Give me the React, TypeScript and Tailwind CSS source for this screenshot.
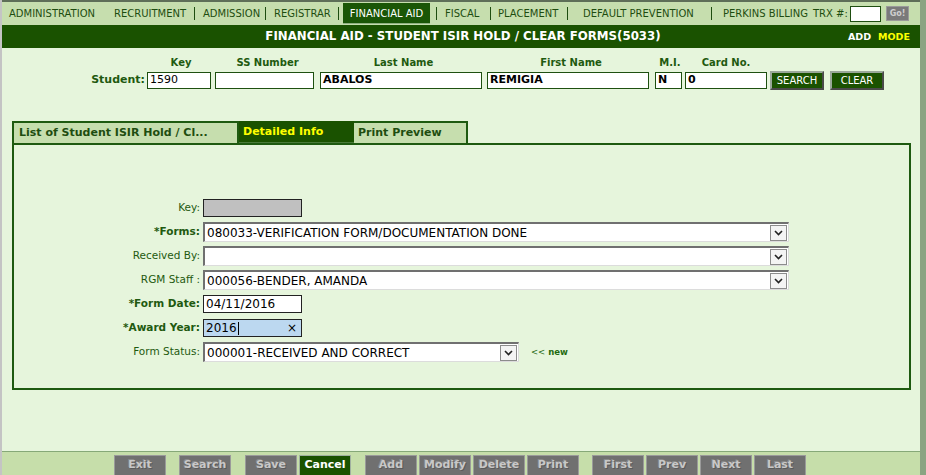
import React from 'react';

const font = { fontFamily: '"DejaVu Sans", Verdana, sans-serif' };

const menu = [
  { label: 'ADMINISTRATION', w: 'w-[105px]', sep: false, gap: '' },
  { label: 'RECRUITMENT', w: 'w-[80px]', sep: false, gap: '' },
  { label: 'ADMISSION', w: 'w-[62px]', sep: true, gap: 'mr-[8px]' },
  { label: 'REGISTRAR', w: 'w-[64px]', sep: true, gap: 'mr-[8px]' },
];
const menu2 = [
  { label: 'FISCAL', w: 'w-[45px]', sep: true, gap: 'mr-[8px]' },
  { label: 'PLACEMENT', w: 'w-[69px]', sep: true, gap: 'mr-[7px]' },
  { label: 'DEFAULT PREVENTION', w: 'w-[128px]', sep: true, gap: 'mr-[15px]' },
  { label: 'PERKINS BILLING', w: 'w-[90px]', sep: true, gap: 'mr-[11px]' },
];

function Chevron() {
  return (
    <span className="flex h-[16px] w-[17px] items-center justify-center border border-[#8c8c8c] bg-[#f4f4f4]">
      <svg width="9" height="6" viewBox="0 0 9 6">
        <path d="M1 1 L4.5 4.5 L8 1" fill="none" stroke="#222" strokeWidth="1.6" />
      </svg>
    </span>
  );
}

function Select({ value, w }: { value: string; w: string }) {
  return (
    <div
      className={`${w} flex h-[20px] items-center justify-between border-t-2 border-l-2 border-t-[#707070] border-l-[#707070] border-b border-r border-b-[#dcdcdc] border-r-[#dcdcdc] bg-white pl-[2px] pr-[1px]`}
    >
      <span className="text-[12px] text-black">{value}</span>
      <Chevron />
    </div>
  );
}

function Row({ label, bold, children }: { label: string; bold?: boolean; children: React.ReactNode }) {
  return (
    <div className="flex h-[24px] items-center">
      <div
        className={`w-[189px] pr-[3px] text-right text-[10.5px] ${bold ? 'font-bold' : ''} text-[#1f5a10]`}
      >
        {label}
      </div>
      {children}
    </div>
  );
}

function TopInput({ w, value, bold }: { w: string; value: string; bold?: boolean }) {
  return (
    <div
      className={`${w} flex h-[17px] items-center border border-[#1e5010] bg-white px-[2px] text-[11px] ${bold ? 'font-bold' : ''} text-black`}
    >
      {value}
    </div>
  );
}

const bottomBtns: { label: string; ml: string; active?: boolean }[] = [
  { label: 'Exit', ml: 'ml-[112px]' },
  { label: 'Search', ml: 'ml-[13px]' },
  { label: 'Save', ml: 'ml-[14px]' },
  { label: 'Cancel', ml: 'ml-[2px]', active: true },
  { label: 'Add', ml: 'ml-[14px]' },
  { label: 'Modify', ml: 'ml-[2px]' },
  { label: 'Delete', ml: 'ml-[2px]' },
  { label: 'Print', ml: 'ml-[2px]' },
  { label: 'First', ml: 'ml-[13px]' },
  { label: 'Prev', ml: 'ml-[2px]' },
  { label: 'Next', ml: 'ml-[2px]' },
  { label: 'Last', ml: 'ml-[2px]' },
];

export default function App() {
  return (
    <div className="flex h-[475px] w-[926px] overflow-hidden bg-[#e6f5dc]" style={font}>
      <div className="w-[2px] bg-[#c4c4c4]" />
      <div className="flex w-[918px] flex-col">
        {/* top menu */}
        <div className="h-[2px] bg-[#5e6e58]" />
        <div className="flex h-[23px] items-center bg-[#c6deae] text-[10px] text-[#1e4d10]">
          <div className="w-[7px]" />
          {menu.map((m) => (
            <React.Fragment key={m.label}>
              {m.sep && <span className={`${m.gap} h-[13px] w-px bg-[#1e4d10]`} />}
              <span className={`${m.w} whitespace-nowrap`}>{m.label}</span>
            </React.Fragment>
          ))}
          <span className="mr-[4px] h-[13px] w-px bg-[#1e4d10]" />
          <span className="mr-[6px] flex h-[21px] w-[87px] items-center justify-center border-b border-[#8fb080] bg-[#1a5606] text-white">
            FINANCIAL AID
          </span>
          {menu2.map((m) => (
            <React.Fragment key={m.label}>
              {m.sep && <span className={`${m.gap} h-[13px] w-px bg-[#1e4d10]`} />}
              <span className={`${m.w} whitespace-nowrap`}>{m.label}</span>
            </React.Fragment>
          ))}
          <span className="w-[37px] whitespace-nowrap">TRX #:</span>
          <span className="h-[16px] w-[31px] border border-[#1e4d10] bg-white" />
          <span className="ml-[5px] flex h-[15px] w-[23px] items-center justify-center border border-[#9a9a9a] bg-[#7a7a7a] text-[8px] font-bold text-[#cfcfcf]">
            Go!
          </span>
        </div>
        {/* header */}
        <div className="relative flex h-[23px] items-center justify-center bg-[#1a5200]">
          <span className="pl-[4px] text-[11.8px] font-bold text-white">
            FINANCIAL AID - STUDENT ISIR HOLD / CLEAR FORMS(5033)
          </span>
          <span className="absolute right-[10px] top-[5px] text-[9.5px] font-bold">
            <span className="text-white">ADD</span>
            <span className="ml-[7px] text-[#ffff00]">MODE</span>
          </span>
        </div>

        {/* content */}
        <div className="flex flex-1 flex-col">
          <div className="ml-[145px] mt-[7px] flex text-[10px] font-bold text-[#1f5a10]">
            <span className="w-[68px] text-center">Key</span>
            <span className="w-[105px] text-center">SS Number</span>
            <span className="w-[167px] text-center">Last Name</span>
            <span className="w-[168px] text-center">First Name</span>
            <span className="w-[30px] text-center">M.I.</span>
            <span className="w-[82px] text-center">Card No.</span>
          </div>
          <div className="mt-[1px] flex items-center">
            <span className="w-[145px] pr-[2px] text-right text-[11px] font-bold text-[#1f5a10]">Student:</span>
            <TopInput w="w-[64px]" value="1590" />
            <div className="w-[4px]" />
            <TopInput w="w-[99px]" value="" />
            <div className="w-[6px]" />
            <TopInput w="w-[162px]" value="ABALOS" bold />
            <div className="w-[5px]" />
            <TopInput w="w-[162px]" value="REMIGIA" bold />
            <div className="w-[6px]" />
            <TopInput w="w-[27px]" value="N" bold />
            <div className="w-[3px]" />
            <TopInput w="w-[82px]" value="0" bold />
            <button className="ml-[3px] flex h-[19px] w-[54px] items-center justify-center border-2 border-t-[#9aa89a] border-l-[#9aa89a] border-b-[#4a4a4a] border-r-[#4a4a4a] bg-[#1a5200] text-[10px] text-white">
              SEARCH
            </button>
            <button className="ml-[6px] flex h-[19px] w-[54px] items-center justify-center border-2 border-t-[#9aa89a] border-l-[#9aa89a] border-b-[#4a4a4a] border-r-[#4a4a4a] bg-[#1a5200] text-[10px] text-white">
              CLEAR
            </button>
          </div>

          {/* tabs */}
          <div className="ml-[10px] mt-[31px] flex">
            <div className="flex h-[22px] w-[227px] items-center border-2 border-b-0 border-[#1e5a10] bg-[#c6deae] pl-[5px] text-[11px] font-bold text-[#1e4d10]">
              List of Student ISIR Hold / Cl...
            </div>
            <div className="flex h-[22px] w-[115px] items-center border-b border-[#4a7a3a] bg-[#1a5200] pl-[4px] pt-[2px] text-[11px] font-bold text-[#ffff00]">
              Detailed Info
            </div>
            <div className="flex h-[22px] w-[114px] items-center border-2 border-b-0 border-l-0 border-[#1e5a10] bg-[#c6deae] pl-[4px] text-[11px] font-bold text-[#1e4d10]">
              Print Preview
            </div>
          </div>
          <div className="ml-[10px] flex h-[247px] w-[899px] flex-col border-2 border-[#1e5a10] pt-[51px]">
            <Row label="Key:">
              <div className="h-[18px] w-[99px] border border-[#222] bg-[#c0c0c0]" />
            </Row>
            <Row label="*Forms:" bold>
              <Select w="w-[586px]" value="080033-VERIFICATION FORM/DOCUMENTATION DONE" />
            </Row>
            <Row label="Received By:">
              <Select w="w-[586px]" value="" />
            </Row>
            <Row label="RGM Staff :">
              <Select w="w-[586px]" value="000056-BENDER, AMANDA" />
            </Row>
            <Row label="*Form Date:" bold>
              <div className="flex h-[18px] w-[99px] items-center border border-[#222] bg-white px-[2px] text-[12px]">
                04/11/2016
              </div>
            </Row>
            <Row label="*Award Year:" bold>
              <div className="flex h-[18px] w-[99px] items-center justify-between border border-[#222] bg-[#bcd8f0] pl-[2px] pr-[4px] text-[12px]">
                <span className="flex items-center">
                  2016<span className="ml-px h-[13px] w-px bg-black" />
                </span>
                <span className="text-[12px]">×</span>
              </div>
            </Row>
            <Row label="Form Status:">
              <Select w="w-[316px]" value="000001-RECEIVED AND CORRECT" />
              <span className="ml-[12px] text-[8.5px] font-bold text-[#1f6a10]">
                <span className="font-normal">&lt;&lt;</span> new
              </span>
            </Row>
          </div>
        </div>

        {/* bottom bar */}
        <div className="h-px bg-[#86a878]" />
        <div className="flex h-[23px] items-end bg-[#c6deaa]">
          {bottomBtns.map((b) => (
            <div
              key={b.label}
              className={`${b.ml} flex h-[20px] w-[52px] items-center justify-center border border-b-0 text-[11px] font-bold ${
                b.active
                  ? 'border-[#a0b0a0] bg-[#1a5200] text-white'
                  : 'border-[#9a9a9a] bg-[#707070] text-[#c8c8c8] [text-shadow:1px_1px_0_#5a5a5a,-1px_-1px_0_#8a8a8a]'
              }`}
            >
              {b.label}
            </div>
          ))}
        </div>
      </div>
      <div className="w-[6px] bg-[#8aa482]" />
    </div>
  );
}
